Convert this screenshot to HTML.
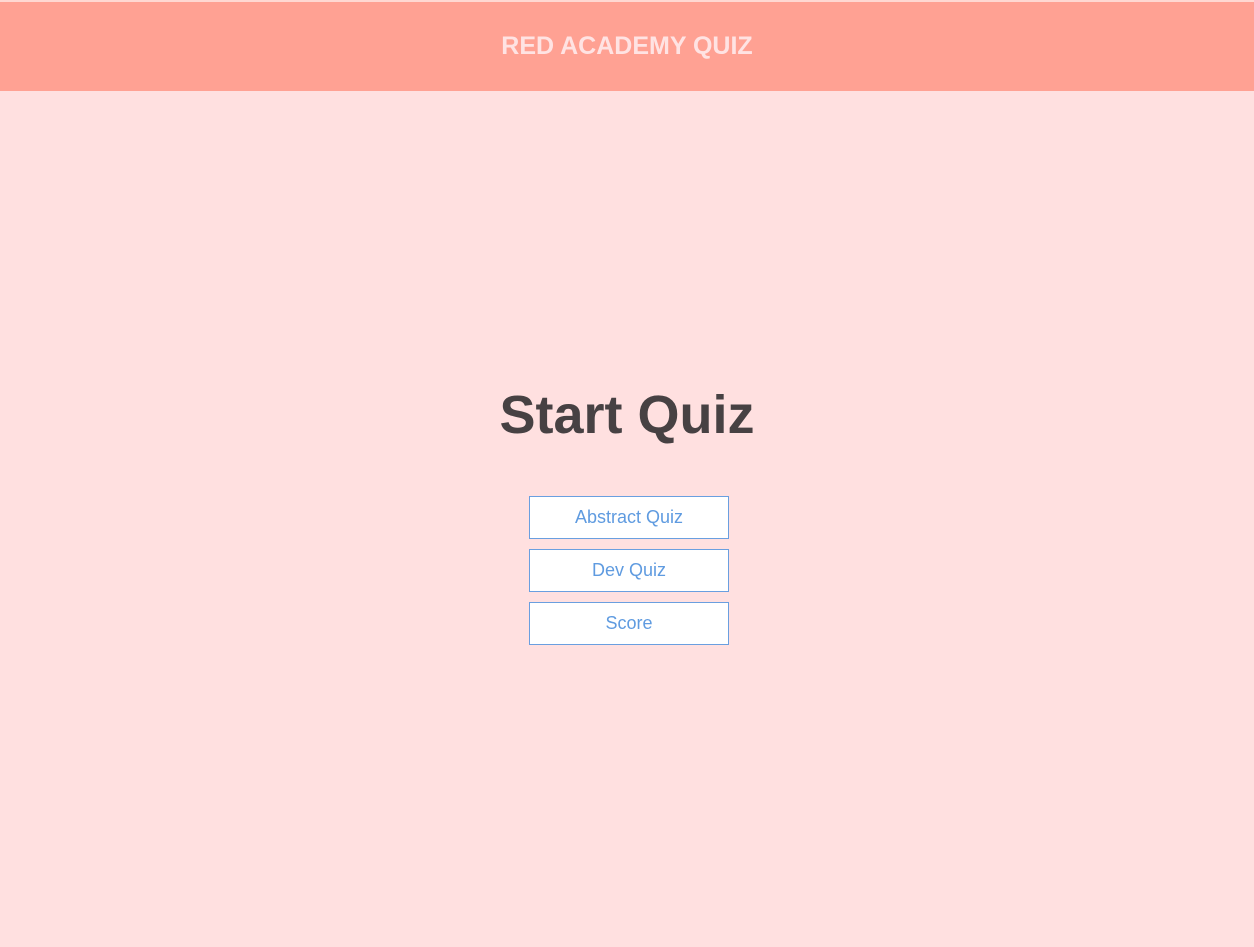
<!DOCTYPE html>
<html><head><style>
html,body{margin:0;padding:0;}
body{width:1254px;height:947px;background:#ffe0e0;font-family:"Liberation Sans",Arial,sans-serif;position:relative;overflow:hidden;}
.top{position:absolute;top:0;left:0;width:1254px;height:2px;background:#ffd8d2;}
header{position:absolute;top:2px;left:0;width:1254px;height:89px;background:#ffa193;color:#ffe3e3;font-weight:bold;font-size:25px;text-align:center;line-height:89px;}
h1{position:absolute;top:379px;left:0;width:1254px;margin:0;text-align:center;font-size:54px;line-height:72px;color:#474143;font-weight:bold;}
.btn{position:absolute;left:529px;width:198px;height:41px;border:1px solid #6a9fe0;background:#fff;color:#5f9be0;font-size:18px;text-align:center;line-height:41px;}
</style></head><body>
<div class="top"></div>
<header>RED ACADEMY QUIZ</header>
<h1>Start Quiz</h1>
<div class="btn" style="top:496px">Abstract Quiz</div>
<div class="btn" style="top:549px">Dev Quiz</div>
<div class="btn" style="top:602px">Score</div>
</body></html>
